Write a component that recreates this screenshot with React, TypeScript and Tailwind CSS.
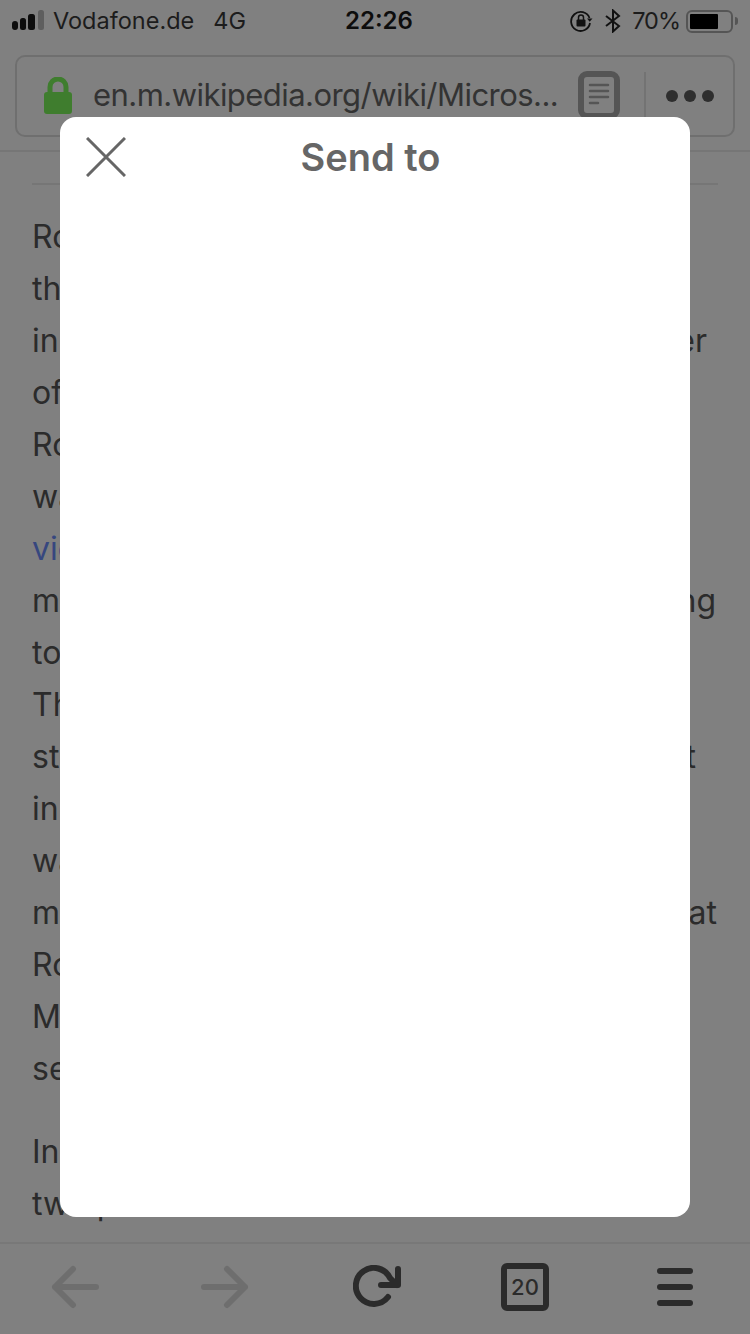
const font = { fontFamily: 'Inter, "Liberation Sans", sans-serif' };

function Line({ left, right, blue, rightClass }: { left: string; right?: string; blue?: boolean; rightClass?: string }) {
  return (
    <div className="flex justify-between h-[52px] leading-[52px] whitespace-nowrap">
      <span className={blue ? "text-[#36477f]" : ""}>{left}</span>
      {right ? <span className={rightClass}>{right}</span> : null}
    </div>
  );
}

export default function App() {
  return (
    <div
      className="relative w-[750px] h-[1334px] overflow-hidden bg-[#808080] flex flex-col text-[#2b2b2b]"
      style={font}
    >
      <header className="h-[152px] shrink-0 border-b-2 border-[#767676] flex flex-col">
        <div className="h-[42px] shrink-0 relative flex items-center pl-[12px] pr-[12px] text-[23.5px] text-[#1c1c1c]">
          <svg width="34" height="22" viewBox="0 0 34 22" className="mr-[7px]">
            <rect x="0" y="11" width="6" height="9" rx="3" fill="#0d0d0d" />
            <rect x="8" y="8" width="6" height="12" rx="2.5" fill="#0d0d0d" />
            <rect x="16" y="4" width="7" height="16" rx="2.5" fill="#0d0d0d" />
            <rect x="26" y="0" width="6" height="20" rx="2.5" fill="#5e5e5e" />
          </svg>
          <span>Vodafone.de</span>
          <span className="ml-[19px]">4G</span>
          <span className="absolute left-[345px] text-[24px] font-semibold text-[#0d0d0d]">22:26</span>
          <div className="ml-auto flex items-center">
            <svg width="24" height="24" viewBox="0 0 24 24" fill="none" className="mr-[12px]">
              <path d="M20.5 9A9.5 9.5 0 1 0 21 14" stroke="#111" strokeWidth="1.8" />
              <path d="M18 9.5h5.5l-2.8 3.2z" fill="#111" />
              <rect x="7.5" y="10.5" width="9" height="7" rx="1" fill="#111" />
              <path d="M9.5 11V8.5a2.5 2.5 0 0 1 5 0V11" stroke="#111" strokeWidth="1.5" />
            </svg>
            <svg width="16" height="24" viewBox="0 0 16 24" fill="none" className="mr-[11px]">
              <path d="M1 7l13 10-6 5.5V1.5L14 7 1 17" stroke="#111" strokeWidth="2" />
            </svg>
            <span className="text-[#1c1c1c] tracking-[-1px]">70%</span>
            <div className="ml-[6px] w-[47px] h-[23px] border-2 border-[#555] rounded-[6px] p-[2px]">
              <div className="h-full w-[28px] bg-black rounded-[1px]" />
            </div>
            <div className="ml-[2px] w-[3px] h-[8px] bg-[#555] rounded-r-[3px]" />
          </div>
        </div>
        <div className="mx-[15px] mt-[13px] h-[82px] border-2 border-[#6f6f6f] rounded-[10px] flex items-center">
          <svg width="30" height="37" viewBox="0 0 30 37" className="ml-[26px] mr-[20px] mt-[-1px] shrink-0" fill="none">
            <path d="M7 17V10a8 8 0 0 1 16 0v7" stroke="#3f7d2e" strokeWidth="5" />
            <rect x="1" y="15" width="28" height="22" rx="3" fill="#3f7d2e" />
          </svg>
          <span className="text-[31px] tracking-[-0.55px] text-[#333] whitespace-nowrap w-[485px] mt-[-1px]">en.m.wikipedia.org/wiki/Micros...</span>
          <svg width="42" height="48" viewBox="0 0 42 48" fill="none" className="shrink-0 mt-[-2px]">
            <rect x="3" y="3" width="36" height="42" rx="6" stroke="#555" strokeWidth="6" />
            <path d="M12 14h18M12 20h18M12 26h18M12 32h8" stroke="#555" strokeWidth="2.5" strokeLinecap="round" />
          </svg>
          <div className="ml-[24px] w-[2px] h-[48px] bg-[#737373]" />
          <div className="ml-[20px] flex gap-[6px]">
            <div className="w-[12px] h-[12px] rounded-full bg-[#2e2e2e]" />
            <div className="w-[12px] h-[12px] rounded-full bg-[#2e2e2e]" />
            <div className="w-[12px] h-[12px] rounded-full bg-[#2e2e2e]" />
          </div>
        </div>
      </header>

      <main className="flex-1 min-h-0 overflow-hidden px-[32px] pt-[31px] text-[32px]">
        <div className="h-[2px] bg-[#767676] mb-[26px]" />
        <Line left="Ro" />
        <Line left="th" />
        <Line left="in" right="er" rightClass="pr-[11px]" />
        <Line left="of" />
        <Line left="Ro" />
        <Line left="wa" />
        <Line left="vie" blue />
        <Line left="m" right="ng" rightClass="pr-[2px]" />
        <Line left="to" />
        <Line left="Th" />
        <Line left="st" right="t" rightClass="pr-[22px]" />
        <Line left="in" />
        <Line left="wa" />
        <Line left="m" right="at" rightClass="pr-[1px]" />
        <Line left="Ro" />
        <Line left="M" />
        <Line left="se" />
        <div className="h-[31px]" />
        <Line left="In" />
        <Line left="two p" />
      </main>

      <footer className="h-[92px] shrink-0 border-t-2 border-[#787878] flex items-center pl-[50px] pb-[4px]">
        <svg width="50" height="44" viewBox="0 0 50 44" fill="none" stroke="#6e6e6e" strokeWidth="6" strokeLinecap="round" strokeLinejoin="round" className="shrink-0">
          <path d="M46 22H5M23 4L5 22l18 18" />
        </svg>
        <svg width="50" height="44" viewBox="0 0 50 44" fill="none" stroke="#6e6e6e" strokeWidth="6" strokeLinecap="round" strokeLinejoin="round" className="shrink-0 ml-[100px]">
          <path d="M4 22h41M27 4l18 18-18 18" />
        </svg>
        <svg width="48" height="44" viewBox="0 0 48 44" fill="none" stroke="#2b2b2b" strokeWidth="6" strokeLinecap="round" strokeLinejoin="round" className="shrink-0 ml-[103px]">
          <path d="M35 32A18 18 0 1 1 37 13l7 7" />
          <path d="M45 4v16H28" />
        </svg>
        <div className="shrink-0 ml-[100px] w-[48px] h-[48px] border-[6px] border-[#2b2b2b] rounded-[6px] flex items-center justify-center text-[22px] font-medium leading-none text-[#2b2b2b]">
          20
        </div>
        <div className="shrink-0 ml-[108px] flex flex-col gap-[10px]">
          <div className="w-[36px] h-[6px] rounded-full bg-[#2b2b2b]" />
          <div className="w-[36px] h-[6px] rounded-full bg-[#2b2b2b]" />
          <div className="w-[36px] h-[6px] rounded-full bg-[#2b2b2b]" />
        </div>
      </footer>

      <section className="absolute left-[60px] top-[117px] w-[630px] h-[1100px] bg-white rounded-[16px]">
        <div className="flex items-center pl-[26px] pr-[75px] pt-[20px]">
          <svg width="40" height="40" viewBox="0 0 40 40" fill="none" stroke="#666" strokeWidth="3" className="shrink-0">
            <path d="M1 1l38 38M39 1L1 39" />
          </svg>
          <h1 className="flex-1 text-center text-[38px] leading-[40px] font-semibold text-[#666]">Send to</h1>
        </div>
      </section>
    </div>
  );
}
